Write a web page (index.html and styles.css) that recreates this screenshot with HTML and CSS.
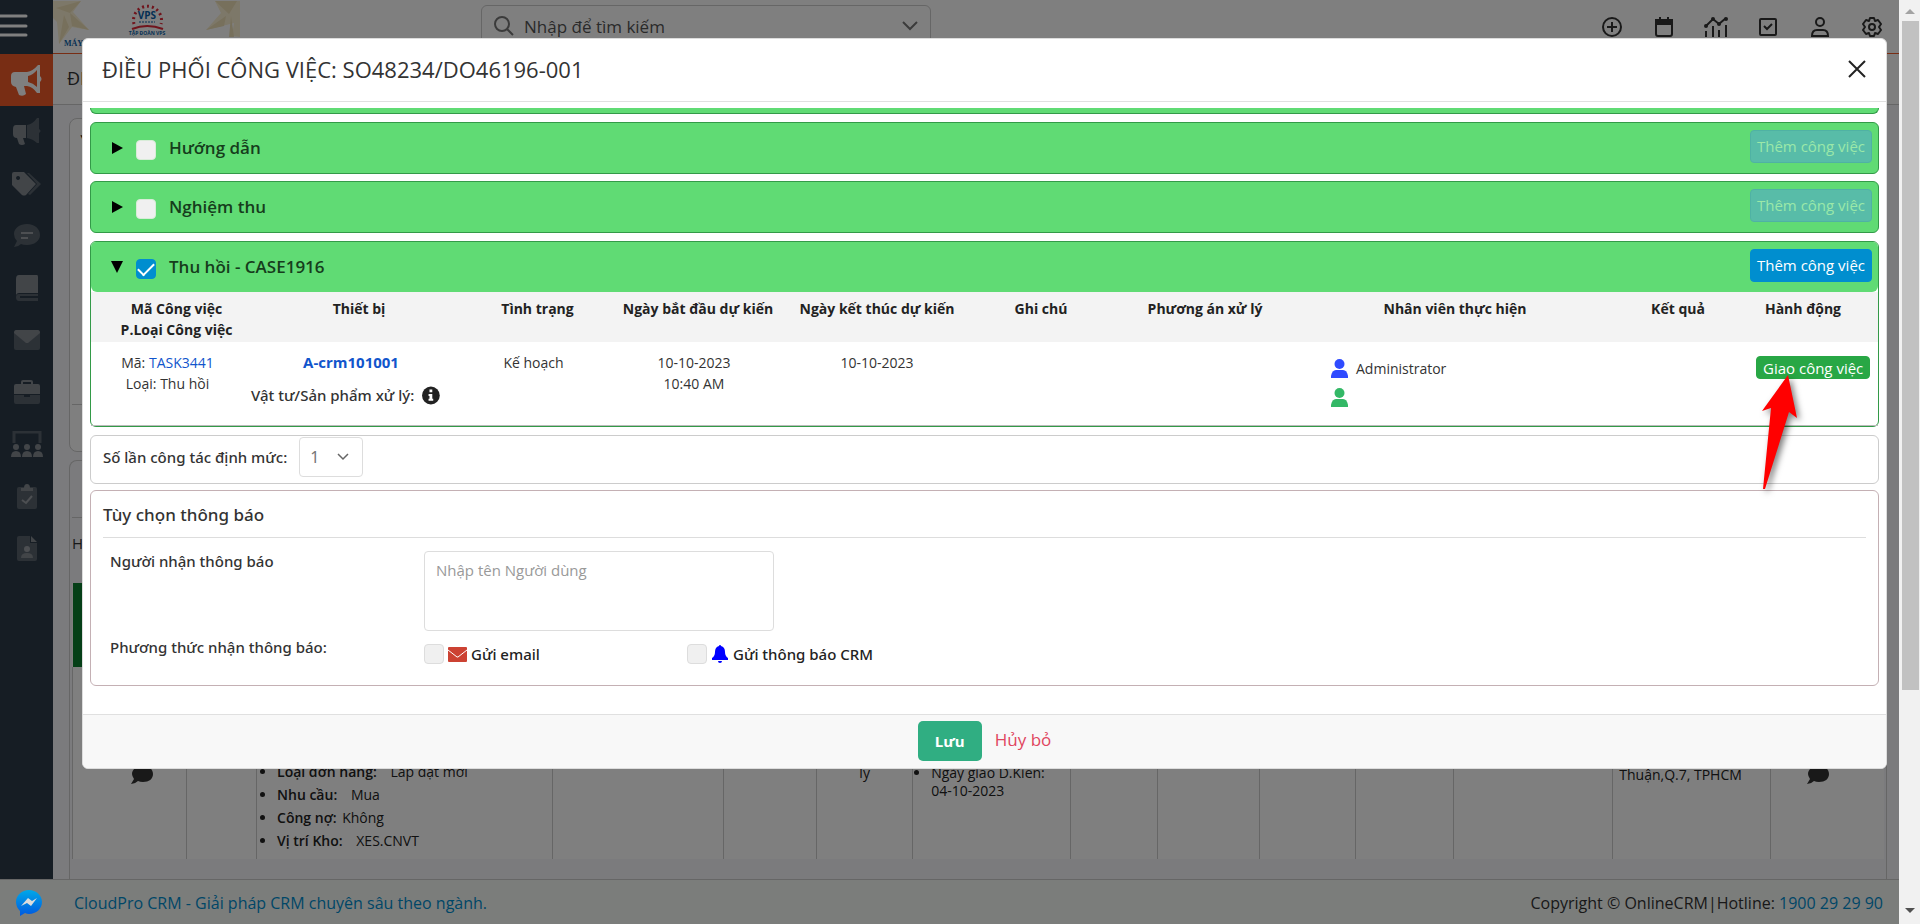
FILE: index.html
```html
<!DOCTYPE html>
<html lang="vi">
<head>
<meta charset="utf-8">
<title>Điều phối công việc</title>
<link rel="stylesheet" href="styles.css">
</head>
<body>
<div class="app">
  <header class="topbar">
    <button class="menu" aria-label="Menu"><svg width="28" height="24" viewBox="0 0 28 24"><path d="M0 2h26M0 12h26M0 21h26" stroke="#fff" stroke-width="3" stroke-linecap="round"/></svg></button>
    <div class="logo">
      <svg width="188" height="51" viewBox="0 0 188 51">
        <g fill="#fbf0d2"><path d="M0 1h28l-8 11 16 18-17-3-13 17-2-22-4-4z"/><path d="M162 1h25v36l-8-1 2-13-28 7 15-17z"/></g>
        <g fill="#eee0b8"><path d="M3 8l14 5L28 1zM11 15l-5 29 10-17zM17 13l19 17-17-4z"/><path d="M162 1l14 13 8-13zM173 16l-20 14 18-4zM178 16l-2 21h5z"/></g>
        <path d="M81 24a14 14 0 1 1 27 0" fill="none" stroke="#e02838" stroke-width="3" stroke-dasharray="2 3"/>
        <path d="M79 29q15-6 31 0" fill="none" stroke="#e02838" stroke-width="2"/>
        <path d="M86 22h16" stroke="#0b5fa8" stroke-dasharray="2 1"/>
        <text x="94" y="19" class="logo-vps">VPS</text>
        <text x="94" y="35" class="logo-sub">TẬP ĐOÀN VPS</text>
        <text x="11" y="46" class="logo-name">MÁY</text>
      </svg>
    </div>
    <label class="search">
      <svg width="20" height="20" viewBox="0 0 20 20" fill="none" stroke="#777" stroke-width="2"><circle cx="8" cy="8" r="7"/><path d="M13 13l6 6"/></svg>
      <input type="text" placeholder="Nhập để tìm kiếm">
      <svg width="16" height="10" viewBox="0 0 16 10" fill="none" stroke="#777" stroke-width="2"><path d="M1 1l7 7 7-7"/></svg>
    </label>
    <nav class="tools">
      <svg viewBox="0 0 20 20"><circle cx="10" cy="10" r="9"/><path d="M10 5v10M5 10h10"/></svg>
      <svg viewBox="0 0 20 20"><rect x="2" y="3" width="16" height="16" rx="2"/><path d="M2 3h16v4H2zM6 0v3M14 0v3" fill="#333"/></svg>
      <svg viewBox="0 0 24 20" class="wide"><path d="M2 9l7-7 6 5 7-6M2 14v6M9 9v11M15 13v7M22 8v12"/><g fill="#333" stroke="none"><circle cx="2" cy="9" r="2"/><circle cx="9" cy="2" r="2"/><circle cx="15" cy="7" r="2"/><circle cx="22" cy="2" r="2"/></g></svg>
      <svg viewBox="0 0 20 20"><rect x="2" y="2" width="16" height="16" rx="1"/><path d="M6 9l3 3 5-5"/></svg>
      <svg viewBox="0 0 20 20"><circle cx="10" cy="5" r="4"/><path d="M2 19q0-6 5-6h6q5 0 5 6z"/></svg>
      <svg viewBox="0 0 20 20"><path d="M8 1h4l1 3 3-1 3 4-2 3 2 3-3 4-3-1-1 3H8l-1-3-3 1-3-4 2-3-2-3 3-4 3 1z" stroke-linejoin="round"/><circle cx="10" cy="10" r="3"/></svg>
    </nav>
  </header>

  <div class="middle">
    <aside class="sidebar">
      <a href="#" class="side active" aria-label="Marketing"><svg width="31" height="31" viewBox="0 0 31 31" fill="#fff"><path fill-rule="evenodd" d="M4 7h12q6-1 11-7h2v11q3 3 0 6v11h-3q-4-6-10-7h-3l2 8q-3 3-7 1l-3-8q-5-1-5-5v-6q0-4 4-4zM17 11v6q5 1 9 5V5q-4 5-9 6z"/></svg></a>
      <a href="#" class="side" aria-label="Chiến dịch"><svg width="28" height="28" viewBox="0 0 28 28"><path fill="#848a91" d="M3 7h10v13h-3l2 6q-3 2-6 0l-2-6q-4 0-4-4v-5q0-4 3-4z"/><path fill="#59636d" d="M14 7q6-1 10-7h2v11q3 2 0 4v10h-2q-4-4-10-5z"/></svg></a>
      <a href="#" class="side" aria-label="Thẻ"><svg width="30" height="24" viewBox="0 0 30 24"><path fill="#59636d" d="M17 1l12 11-11 11-2-1 9-10L15 1z"/><path fill="#848a91" fill-rule="evenodd" d="M2 0h10l12 12-10 11q-2 1-4 0L0 13V2q0-2 2-2zM6 4a2 2 0 1 0 .1 0z"/></svg></a>
      <a href="#" class="side" aria-label="Trao đổi"><svg width="28" height="24" viewBox="0 0 28 24"><path fill="#59636d" d="M14 0C22 0 27 5 27 11s-6 10-13 10q-4 0-6-1-3 3-7 3l3-6Q1 14 1 10C1 4 7 0 14 0z"/><path d="M8 9h12M8 14h7" stroke="#9a9fa5" stroke-width="2"/></svg></a>
      <a href="#" class="side" aria-label="Sổ"><svg width="24" height="26" viewBox="0 0 24 26"><path fill="#848a91" d="M4 0h18q1 0 1 2v16H4q-2 0-3 2V4q0-4 3-4z"/><path fill="#59636d" d="M1 22q0-3 3-3h19v2H5v2h18v3H4q-3 0-3-4z"/></svg></a>
      <a href="#" class="side" aria-label="Thư"><svg width="26" height="20" viewBox="0 0 26 20"><rect width="26" height="19" y="1" rx="2" fill="#59636d"/><path fill="#848a91" d="M2 0h22q2 0 2 3L14 13h-2L0 3q0-3 2-3z"/></svg></a>
      <a href="#" class="side" aria-label="Công việc"><svg width="26" height="24" viewBox="0 0 26 24"><path fill="#848a91" fill-rule="evenodd" d="M7 4V2q0-2 2-2h8q2 0 2 2v2h5q2 0 2 2v8H0V6q0-2 2-2zM9 2v2h8V2z"/><path fill="#59636d" d="M0 15h10v2h6v-2h10v7q0 2-2 2H2q-2 0-2-2z"/></svg></a>
      <a href="#" class="side" aria-label="Nhóm"><svg width="32" height="26" viewBox="0 0 32 26"><path d="M3 12V1h26v11" fill="none" stroke="#59636d" stroke-width="3"/><g fill="#848a91"><circle cx="5" cy="16" r="3"/><circle cx="16" cy="16" r="3"/><circle cx="27" cy="16" r="3"/><path d="M0 26q0-6 5-6t5 6zM11 26q0-6 5-6t5 6zM22 26q0-6 5-6t5 6z"/></g></svg></a>
      <a href="#" class="side" aria-label="Nhiệm vụ"><svg width="20" height="25" viewBox="0 0 20 25"><rect y="3" width="20" height="22" rx="2" fill="#59636d"/><path d="M5 16l4 3 6-7" fill="none" stroke="#9a9fa5" stroke-width="2"/><path fill="#848a91" d="M4 7V4h3q0-4 3-4t3 4h3v3z"/></svg></a>
      <a href="#" class="side" aria-label="Hồ sơ"><svg width="20" height="25" viewBox="0 0 20 25"><path fill="#59636d" d="M2 0h11v7h7v16q0 2-2 2H2q-2 0-2-2V2q0-2 2-2z"/><path fill="#848a91" d="M14 0l6 6h-6zM4 22q0-5 6-5t6 5z"/><circle cx="10" cy="13" r="3" fill="#9a9fa5"/></svg></a>
    </aside>

    <main class="page">
      <div class="crumb">ĐI</div>
      <div class="content">
        <section class="filter"><span>▼</span><div class="filter-foot"></div></section>
        <section class="listing">
          <div class="listing-bar"></div>
          <div class="listing-title">H</div>
          <table class="orders">
            <colgroup><col style="width:114px"><col style="width:70px"><col style="width:296px"><col style="width:171px"><col style="width:93px"><col style="width:96px"><col style="width:158px"><col style="width:87px"><col style="width:102px"><col style="width:96px"><col style="width:98px"><col style="width:159px"><col style="width:158px"><col style="width:113px"></colgroup>
            <thead><tr><th colspan="14"></th></tr></thead>
            <tbody><tr>
              <td class="mid first"><svg width="22" height="18" viewBox="0 0 22 18"><path fill="#333" d="M12 0c6 0 10 3 10 8s-4 8-10 8q-3 0-5-1-3 3-7 3l3-5Q1 10 1 8c0-5 5-8 11-8z"/></svg></td>
              <td></td>
              <td><ul class="facts"><li><b>Loại đơn hàng:</b> <span>Lắp đặt mới</span></li><li><b>Nhu cầu:</b> <span>Mua</span></li><li><b>Công nợ:</b> <i>Không</i></li><li><b>Vị trí Kho:</b> <span>XES.CNVT</span></li></ul></td>
              <td></td>
              <td></td>
              <td class="mid">lý</td>
              <td class="due"><ul><li>Ngày giao D.Kiến: 04-10-2023</li></ul></td>
              <td></td><td></td><td></td><td></td>
              <td></td>
              <td class="place">Thuận,Q.7, TPHCM</td>
              <td class="mid last"><svg width="22" height="18" viewBox="0 0 22 18"><path fill="#333" d="M12 0c6 0 10 3 10 8s-4 8-10 8q-3 0-5-1-3 3-7 3l3-5Q1 10 1 8c0-5 5-8 11-8z"/></svg></td>
            </tr></tbody>
          </table>
        </section>
      </div>
    </main>
  </div>

  <footer class="foot">
    <svg class="messenger" width="26" height="26" viewBox="0 0 26 26"><defs><linearGradient id="m" x1="0" y1="0" x2="0" y2="1"><stop offset="0" stop-color="#00a8e8"/><stop offset="1" stop-color="#0058e0"/></linearGradient></defs><path fill="url(#m)" d="M13 0c7 0 13 5 13 12s-6 12-13 12q-2 0-4-1l-5 3v-5Q0 17 0 12C0 5 6 0 13 0z"/><path fill="#ddd" d="M5 16l7-8 4 3 5-3-6 8-4-3z"/></svg>
    <a href="#">CloudPro CRM - Giải pháp CRM chuyên sâu theo ngành.</a>
    <p>Copyright © OnlineCRM|Hotline: <a href="#">1900 29 29 90</a></p>
  </footer>

  <div class="backdrop">
    <div class="modal" role="dialog" aria-labelledby="dlg">
      <div class="modal-head">
        <h1 id="dlg">ĐIỀU PHỐI CÔNG VIỆC: SO48234/DO46196-001</h1>
        <button class="close" aria-label="Đóng"><svg width="18" height="18" viewBox="0 0 18 18"><path d="M1 1l16 16M17 1L1 17" stroke="#222" stroke-width="2"/></svg></button>
      </div>
      <div class="modal-body">
        <div class="peek"></div>
        <section class="job">
          <div class="job-head"><svg width="12" height="12" viewBox="0 0 12 12"><path d="M1 0l11 6-11 6z"/></svg><input type="checkbox" id="j1"><label for="j1">Hướng dẫn</label><button class="add" disabled>Thêm công việc</button></div>
        </section>
        <section class="job">
          <div class="job-head"><svg width="12" height="12" viewBox="0 0 12 12"><path d="M1 0l11 6-11 6z"/></svg><input type="checkbox" id="j2"><label for="j2">Nghiệm thu</label><button class="add" disabled>Thêm công việc</button></div>
        </section>
        <section class="job open">
          <div class="job-head"><svg width="12" height="12" viewBox="0 0 12 12"><path d="M0 0h12L6 12z"/></svg><input type="checkbox" id="j3" checked><label for="j3">Thu hồi - CASE1916</label><button class="add">Thêm công việc</button></div>
          <table class="tasks">
            <colgroup><col style="width:171px"><col style="width:194px"><col style="width:163px"><col style="width:158px"><col style="width:200px"><col style="width:128px"><col style="width:200px"><col style="width:300px"><col style="width:146px"><col style="width:127px"></colgroup>
            <thead><tr><th>Mã Công việc<br>P.Loại Công việc</th><th>Thiết bị</th><th>Tình trạng</th><th>Ngày bắt đầu dự kiến</th><th>Ngày kết thúc dự kiến</th><th>Ghi chú</th><th>Phương án xử lý</th><th>Nhân viên thực hiện</th><th>Kết quả</th><th class="act">Hành động</th></tr></thead>
            <tbody><tr>
              <td class="shift">Mã: <a href="#">TASK3441</a><br>Loại: Thu hồi</td>
              <td class="device"><a href="#">A-crm101001</a><div class="parts">Vật tư/Sản phẩm xử lý: <svg width="19" height="19" viewBox="0 0 19 19"><circle cx="9.500" cy="9.500" r="9.500" fill="#222"/><path fill="#fff" d="M8 3h3v3H8zM7 8h4v5h1v2H7v-2h1v-3H7z"/></svg></div></td>
              <td class="nudge">Kế hoạch</td>
              <td class="nudge">10-10-2023<br>10:40 AM</td>
              <td>10-10-2023</td>
              <td></td><td></td>
              <td class="staff"><div><svg width="17" height="19" viewBox="0 0 17 19" fill="#2f4bff"><circle cx="8.500" cy="5" r="5"/><path d="M0 19v-2q1-6 5-6h7q4 0 5 6v2z"/></svg>Administrator</div><div><svg width="17" height="19" viewBox="0 0 17 19" fill="#33b866"><circle cx="8.500" cy="5" r="5"/><path d="M0 19v-2q1-6 5-6h7q4 0 5 6v2z"/></svg></div></td>
              <td></td>
              <td class="assign-cell"><div class="assign-wrap"><button class="assign">Giao công việc</button><svg class="arrow" width="48" height="124" viewBox="0 0 48 124"><path fill="red" d="M26 0l9 43-8-6L3 114H1l8-81-9 3z"/></svg></div></td>
            </tr></tbody>
          </table>
        </section>
        <section class="quota">
          <label for="q">Số lần công tác định mức:</label>
          <span class="select"><select id="q"><option>1</option></select><svg width="12" height="8" viewBox="0 0 12 8"><path d="M1 1l5 5 5-5" fill="none" stroke="#666" stroke-width="1.500"/></svg></span>
        </section>
        <section class="notify">
          <h2>Tùy chọn thông báo</h2>
          <div class="form">
            <label for="rcv">Người nhận thông báo</label>
            <textarea id="rcv" placeholder="Nhập tên Người dùng"></textarea>
            <span class="way">Phương thức nhận thông báo:</span>
            <div class="ways">
              <div class="opt"><input type="checkbox" id="em"><svg width="19" height="15" viewBox="0 0 19 15"><rect width="19" height="15" rx="1" fill="#cc4233"/><path d="M0 3l9 7h1l9-7" fill="none" stroke="#fff"/></svg><label for="em">Gửi email</label></div>
              <div class="opt"><input type="checkbox" id="crm"><svg class="bell" width="18" height="18" viewBox="0 0 18 18" fill="#00f"><path d="M9 0q1 0 1 1 4 1 4 6 0 4 3 6v2H1v-2q3-2 3-6 0-5 4-6 0-1 1-1zM7 16h4q0 2-2 2t-2-2z"/></svg><label for="crm">Gửi thông báo CRM</label></div>
            </div>
          </div>
        </section>
      </div>
      <div class="modal-foot"><button class="save">Lưu</button><a href="#">Hủy bỏ</a></div>
    </div>
  </div>
</div>
<div class="scroll"><svg width="10" height="5" viewBox="0 0 10 5"><path d="M0 5l5-5 5 5z" fill="#a3a3a3"/></svg><div class="thumb"></div><svg width="10" height="5" viewBox="0 0 10 5"><path d="M0 0l5 5 5-5z" fill="#505050"/></svg></div>
</body>
</html>
```
FILE: styles.css
```css
* { box-sizing: border-box; }
body { margin: 0; height: 100vh; display: grid; grid-template-columns: 1fr 21px; overflow: hidden; font: 15px/21px "Open Sans", "Noto Sans", sans-serif; color: #333; }
a { color: #008ecf; text-decoration: none; }
button, input, select, textarea { font: inherit; color: inherit; margin: 0; }
.app { position: relative; display: flex; flex-direction: column; height: 100vh; min-width: 0; }

.topbar { display: flex; height: 54px; background: #fff; border-bottom: 1px solid #f15a29; }
.menu { width: 53px; height: 54px; border: 0; padding: 0 0 2px; background: #2c3b49; text-align: left; flex: none; }
.menu svg { display: block; }
.logo { width: 428px; flex: none; }
.logo svg { display: block; }
.logo-vps { font: bold 10px "Open Sans", sans-serif; fill: #0b5fa8; text-anchor: middle; }
.logo-sub { font: bold 5px "Open Sans", sans-serif; fill: #0b5fa8; text-anchor: middle; }
.logo-name { font: bold 8px "Liberation Serif", serif; fill: #0b5fa8; }
.search { display: flex; align-items: center; gap: 10px; width: 450px; height: 42px; margin-top: 5px; padding: 0 12px; border: 1px solid #ccc; border-radius: 6px; }
.search input { flex: 1; border: 0; padding: 0; background: none; font-size: 17px; outline: 0; }
.search input::placeholder { color: #555; }
.tools { display: flex; gap: 32px; align-items: center; margin-left: auto; padding-right: 17px; }
.tools svg { width: 20px; height: 20px; fill: none; stroke: #333; stroke-width: 2; }
.tools .wide { width: 24px; margin: 0 -2px; }

.middle { display: flex; flex: 1; min-height: 0; }
.sidebar { width: 53px; flex: none; background: #2c3b49; }
.side { display: flex; align-items: center; justify-content: center; height: 52px; }
.side.active { background: #f15a29; }
.page { flex: 1; min-width: 0; display: flex; flex-direction: column; background: #f6f7fb; }
.crumb { height: 51px; padding: 14px; background: #fff; border-bottom: 1px solid #ccc; font-size: 18px; }
.content { flex: 1; display: flex; flex-direction: column; gap: 8px; padding: 13px 12px 0 16px; }
.filter { height: 334px; display: flex; flex-direction: column; padding: 8px 2px 7px; border: 1px solid #ccc; border-radius: 8px; background: #fff; }
.filter span { font-size: 12px; padding-left: 6px; color: #222; }
.filter-foot { margin-top: auto; height: 40px; border-top: 1px solid #ccc; }
.listing { flex: 1; padding: 0 2px; border: 1px solid #ccc; border-bottom: 0; border-radius: 8px 8px 0 0; }
.listing-bar { height: 57px; border-bottom: 1px solid #ccc; }
.listing-title { height: 65px; padding-top: 15px; }
.orders { width: 100%; table-layout: fixed; border-collapse: collapse; background: #fff; font-size: 14px; line-height: 18px; }
.orders th { height: 84px; background: #0a7f2e; }
.orders td { height: 192px; padding: 93px 6px 0; border-left: 1px solid #ccc; vertical-align: top; color: #222; }
.orders .mid { text-align: center; padding-top: 97px; }
.orders .first { padding-left: 30px; padding-top: 99px; }
.orders .last { padding-right: 26px; padding-top: 99px; }
.orders .due { padding: 97px 20px 0 4px; }
.orders .place { padding-top: 99px; white-space: nowrap; }
.orders ul { margin: 0; padding-left: 14px; }
.orders .facts { line-height: 23px; }
.facts b { font-weight: 600; margin-right: 10px; }
.facts i { font-style: normal; font-weight: 400; margin-left: -8px; }

.foot { display: flex; align-items: center; height: 45px; padding: 2px 16px 0; border-top: 1px solid #ccc; background: #f7faf7; font-size: 16px; }
.messenger { margin-right: 32px; position: relative; z-index: 2; }
.foot p { margin: 0 0 0 auto; }

.backdrop { position: absolute; inset: 0; padding: 38px 12px 0 82px; background: rgba(0,0,0,.5); }
.modal { background: #fff; border: 1px solid #ddd; border-radius: 6px; overflow: hidden; }
.modal-head { display: flex; justify-content: space-between; align-items: center; height: 63px; padding: 0 20px 2px 19px; border-bottom: 1px solid #e0e0e0; }
h1 { margin: 0; font-size: 22px; font-weight: 500; }
.close { border: 0; background: none; padding: 0; height: 20px; }
.close svg { display: block; }
.modal-body { padding: 6px 7px 28px; }
.peek { height: 6px; margin-bottom: 8px; background: #60db74; border: 1px solid #339a48; border-top: 0; border-radius: 0 0 6px 6px; }
.job { margin-bottom: 7px; border: 1px solid #339a48; border-radius: 6px; background: #60db74; }
.job-head { display: flex; align-items: center; height: 50px; padding: 0 6px 0 20px; font-size: 17px; font-weight: 600; color: #163d1c; }
.job-head svg { margin-right: 13px; fill: #000; }
.job-head label { margin: 0 auto 0 13px; padding-bottom: 1px; }
input[type=checkbox] { appearance: none; width: 20px; height: 20px; border: 1px solid #ddd; border-radius: 4px; background: #f0f0f0; flex: none; }
.job-head input { margin-top: 4px; border-color: #d8ecd8; }
.job-head input:checked { border-color: #008ecf; background: #008ecf; display: grid; place-items: center; }
.job-head input:checked::after { content: ""; width: 14px; height: 7px; margin-bottom: 4px; border: solid #fff; border-width: 0 0 2px 2px; rotate: -45deg; }
.add { height: 33px; margin-bottom: 4px; padding: 0 6px; border: 1px solid #008ecf; border-radius: 4px; background: #008ecf; color: #fff; font-size: 15px; font-weight: 400; }
.add:disabled { border-color: #4fb2a4; background: #58bca8; color: #9be8a8; }
.open { margin: 8px 0; background: #fff; }
.open .job-head { background: #60db74; border-radius: 5px 5px 6px 6px; }
.tasks { width: 100%; table-layout: fixed; border-collapse: collapse; text-align: center; font-size: 14px; }
.tasks th { height: 50px; padding: 6px 0 2px; background: #f3f3f3; vertical-align: top; color: #222; white-space: nowrap; }
.tasks td { height: 83px; padding: 10px 0 0; vertical-align: top; border-bottom: 1px solid #bbb; }
.tasks .act { padding-right: 23px; }
.tasks a { color: #1155cc; }
.tasks .shift { padding-right: 18px; }
.tasks .device { padding-right: 16px; white-space: nowrap; }
.tasks .nudge { padding-right: 8px; }
.device a { font-size: 15px; font-weight: 700; }
.parts { display: flex; align-items: center; gap: 8px; margin: 12px 0 0 -11px; }
.parts, .quota, .form { font-family: "Noto Sans", sans-serif; font-size: 15px; font-weight: 500; }
.staff div { display: flex; align-items: center; gap: 8px; height: 29px; padding: 4px 0 0 26px; }
.assign-wrap { position: relative; padding: 4px 9px 0 5px; text-align: right; }
.assign { height: 23px; padding: 0 6px; border: 1px solid #28a745; border-radius: 4px; background: #28a745; color: #fff; font-size: 15px; line-height: 20px; white-space: nowrap; }
.arrow { position: absolute; left: 11px; top: 23px; filter: drop-shadow(3px 3px 3px rgba(0,0,0,.5)); }
.quota { display: flex; align-items: center; gap: 12px; height: 49px; padding: 0 12px 4px; border: 1px solid #ccc; border-radius: 6px; }
.select { display: flex; align-items: center; position: relative; }
.select select { appearance: none; width: 64px; height: 40px; padding: 0 10px; border: 1px solid #ddd; border-radius: 4px; background: #fff; color: #777; font-size: 16px; font-weight: 400; }
.select svg { position: absolute; right: 14px; pointer-events: none; }
.notify { margin-top: 6px; padding: 0 12px; height: 196px; border: 1px solid #c4b0b4; border-radius: 6px; }
h2 { margin: 0; height: 47px; padding-top: 13px; border-bottom: 1px solid #ddd; font: 500 17px/21px "Noto Sans", sans-serif; }
.form { display: grid; grid-template-columns: 314px 1fr; padding: 13px 7px 0; }
textarea { width: 350px; height: 80px; padding: 8px 11px; border: 1px solid #ddd; border-radius: 4px; resize: none; }
textarea::placeholder { color: #999; font-family: "Open Sans", sans-serif; font-weight: 400; }
.way { padding-top: 6px; }
.ways { display: grid; grid-template-columns: 263px 1fr; padding-top: 13px; color: #222; }
.opt { display: flex; align-items: center; gap: 4px; }
.modal-foot { display: flex; justify-content: center; align-items: center; gap: 13px; height: 54px; border-top: 1px solid #e0e0e0; background: #f8f8f8; font-size: 17px; }
.modal-foot a { padding-bottom: 3px; color: #e0455e; }
.save { width: 64px; height: 40px; border: 0; border-radius: 5px; background: #30ae82; color: #fff; font-size: 15px; font-weight: 700; }

.scroll { display: flex; flex-direction: column; align-items: center; padding: 9px 0 11px 2px; background: #f1f1f1; border-right: 1px solid #f1f1f1; }
.thumb { width: 17px; height: 74%; margin: 7px 0 auto; background: #c1c1c1; }
```
